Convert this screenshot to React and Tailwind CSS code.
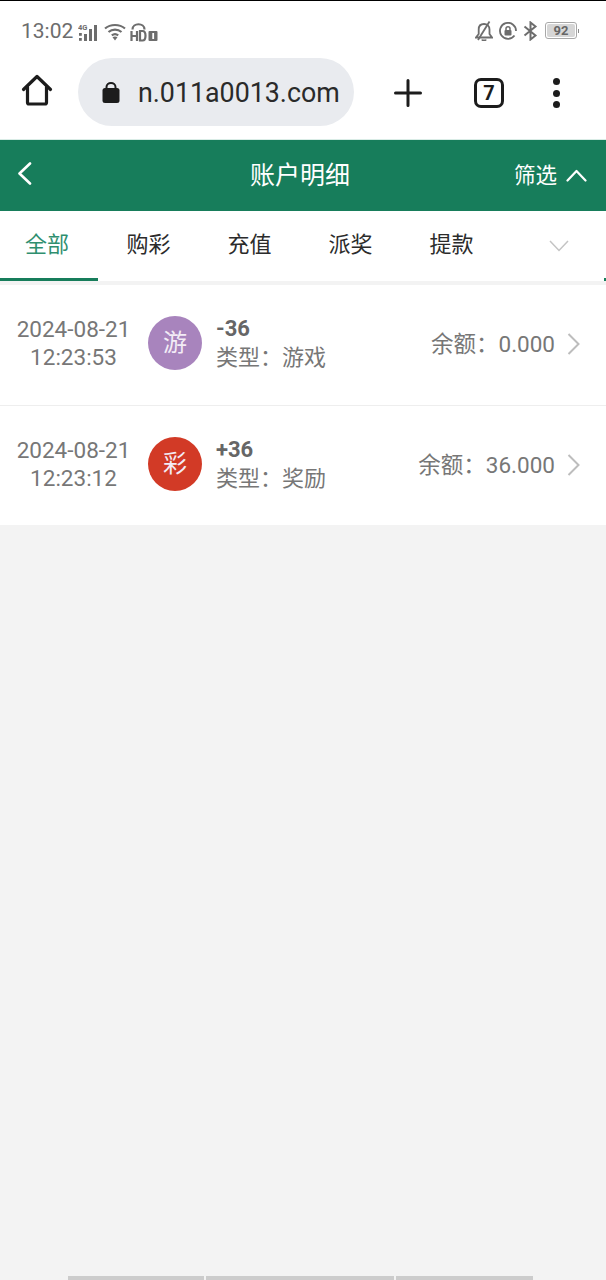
const cjk = { fontFamily: 'Roboto, "Noto Sans CJK SC", sans-serif' };

function StatusLeft() {
  return (
    <div className="flex items-center pt-[2px]">
      <span className="text-[21px] leading-none text-[#6d6d6d]">13:02</span>
      <svg className="ml-[5px]" width="21" height="18" viewBox="0 0 21 18" fill="#6d6d6d">
        <text x="0" y="6.5" fontSize="7.5" fontFamily="Roboto" fontWeight="700">4G</text>
        <rect x="1" y="10" width="2.800" height="2.800" />
        <rect x="1" y="15" width="2.800" height="2.800" />
        <rect x="6" y="11" width="3" height="7" />
        <rect x="11" y="6" width="3" height="12" />
        <rect x="16" y="2" width="3" height="16" />
      </svg>
      <svg className="ml-[5px]" width="22" height="18" viewBox="0 0 22 18" fill="none" stroke="#6d6d6d" strokeWidth="2.200">
        <path d="M1 5.5C6.5 .8 15.500 .8 21 5.500" />
        <path d="M4.500 9C8.200 5.800 13.800 5.800 17.500 9" />
        <path d="M7.800 12.300C9.800 10.700 12.200 10.700 14.200 12.300" />
        <path d="M11 17.500L8.500 14.300C10 13.300 12 13.300 13.500 14.300Z" fill="#6d6d6d" stroke="none" />
      </svg>
      <svg className="ml-[4px]" width="28" height="20" viewBox="0 0 28 20" fill="none">
        <path d="M2.500 7.500C2.500 .5 14.500 .5 14.500 7.500" stroke="#6d6d6d" strokeWidth="2.200" />
        <path d="M1.500 9V19M7 9V19M1.500 14H7" stroke="#6d6d6d" strokeWidth="2.200" />
        <path d="M10 9H12.500C16.500 9 16.500 18.500 12.500 18.500H10Z" stroke="#6d6d6d" strokeWidth="2.200" />
        <rect x="18.500" y="9" width="9" height="10" rx="1" fill="#6d6d6d" />
        <rect x="22.300" y="11" width="1.800" height="6" fill="#fff" />
      </svg>
    </div>
  );
}

function StatusRight() {
  return (
    <div className="flex items-center">
      <svg width="18" height="20" viewBox="0 0 18 20" fill="none" stroke="#6d6d6d" strokeWidth="1.800">
        <path d="M1 16.500H17L14.500 13V8.500C14.500 5 12 3 9 3S3.700 5 3.700 8.500V13Z" />
        <path d="M7 18.500C7.500 19.700 10.500 19.700 11 18.500" />
        <path d="M14.500 .5L3 19" />
      </svg>
      <svg className="ml-[6px]" width="18" height="18" viewBox="0 0 18 18" fill="none">
        <path d="M15.500 13.500A8 8 0 1 1 17 9" stroke="#6d6d6d" strokeWidth="1.800" />
        <rect x="5.500" y="8" width="7" height="5.500" rx="1" fill="#6d6d6d" />
        <path d="M7 8V6.500C7 4 11 4 11 6.500V8" stroke="#6d6d6d" strokeWidth="1.500" />
      </svg>
      <svg className="ml-[6px]" width="15" height="20" viewBox="0 0 15 20" fill="none" stroke="#6d6d6d" strokeWidth="2">
        <path d="M1.500 5.500L12.500 14.500L7.500 18.500V1.500L12.500 5.500L1.500 14.500" />
      </svg>
      <div className="ml-[7px] flex items-center">
        <div className="flex h-[17px] w-[32px] items-center justify-center rounded-[3px] border border-[#a8a8a8] p-[1px]">
          <div className="flex h-full w-full items-center justify-center rounded-[2px] bg-[#d6d6d6] text-[13px] leading-none font-bold text-[#666666]">92</div>
        </div>
        <div className="ml-[1px] h-[4px] w-[1px] bg-[#8a8a8a]" />
      </div>
    </div>
  );
}

function BrowserBar() {
  return (
    <div className="flex h-[82px] items-start border-b border-[#d9ece6] bg-white">
      <div className="flex w-[78px] justify-center pt-[16px] pr-[4px]">
        <svg width="32" height="32" viewBox="0 0 32 32" fill="none" stroke="#1c1c1c" strokeWidth="3.200" strokeLinejoin="round" strokeLinecap="round">
          <path d="M2.500 15.500L16 2.500L29.500 15.500" />
          <path d="M6.500 13V28.500C6.500 29.500 7 30 8 30H24C25 30 25.500 29.500 25.500 28.500V13" />
        </svg>
      </div>
      <div className="flex h-[68px] w-[276px] items-center overflow-hidden rounded-[34px] bg-[#e9ebef]">
        <svg className="ml-[24px] shrink-0" width="18" height="22" viewBox="0 0 18 22" fill="#1c1c1c">
          <rect x="0.500" y="7" width="17" height="15" rx="2.500" />
          <path d="M4.500 8V6C4.500 .5 13.500 .5 13.500 6V8" fill="none" stroke="#1c1c1c" strokeWidth="2" />
        </svg>
        <span className="ml-[18px] whitespace-nowrap pt-[2px] text-[26.800px] leading-none text-[#2a2a2a]">n.011a0013.com</span>
      </div>
      <div className="flex flex-1 items-center pl-[40px] pt-[20px]">
        <svg width="28" height="28" viewBox="0 0 28 28" stroke="#1c1c1c" strokeWidth="3" strokeLinecap="round">
          <path d="M1.500 14H26.500M14 1.500V26.500" />
        </svg>
        <div className="ml-[52px] flex h-[30px] w-[30px] items-center justify-center rounded-[7px] border-[3px] border-[#1c1c1c] text-[20px] leading-none font-bold text-[#1c1c1c]">7</div>
        <div className="ml-[49px] flex flex-col gap-[4.500px]">
          <div className="h-[7px] w-[7px] rounded-full bg-[#1c1c1c]" />
          <div className="h-[7px] w-[7px] rounded-full bg-[#1c1c1c]" />
          <div className="h-[7px] w-[7px] rounded-full bg-[#1c1c1c]" />
        </div>
      </div>
    </div>
  );
}

function Header() {
  return (
    <div className="relative flex h-[71px] items-center justify-center bg-[#177d5b] pr-[6px] text-white">
      <svg className="absolute left-[17px] top-[22px]" width="15" height="23" viewBox="0 0 15 23" fill="none" stroke="#fff" strokeWidth="2.600" strokeLinecap="round" strokeLinejoin="round">
        <path d="M13 1.500L2.500 11.500L13 21.500" />
      </svg>
      <span className="text-[25px] leading-none">账户明细</span>
      <div className="absolute right-[19px] top-0 flex h-full items-center">
        <span className="text-[21.500px] leading-none">筛选</span>
        <svg className="ml-[9px]" width="21" height="13" viewBox="0 0 21 13" fill="none" stroke="#fff" strokeWidth="2.200" strokeLinecap="round" strokeLinejoin="round">
          <path d="M1.500 11.500L10.500 2L19.500 11.500" />
        </svg>
      </div>
    </div>
  );
}

function Tabs() {
  const tabs = ['全部', '购彩', '充值', '派奖', '提款'];
  return (
    <div className="relative flex h-[74px] border-b-[4px] border-[#f3f3f3] bg-white">
      {tabs.map((t, i) => (
        <div key={t} className={i === 0
          ? 'flex h-[70px] w-[98px] items-center justify-center border-b-[3px] border-[#177d5b] pr-[4px] text-[22px] leading-none text-[#2f8f6f]'
          : 'flex h-[70px] w-[101px] items-center justify-center pb-[2px] text-[22px] leading-none text-[#2b2b2b]'}>
          {t}
        </div>
      ))}
      <svg className="ml-auto mr-[37px] mt-[29px]" width="20" height="12" viewBox="0 0 20 12" fill="none" stroke="#c4c4c4" strokeWidth="1.500">
        <path d="M1 1L10 10.500L19 1" />
      </svg>
      <div className="absolute right-0 top-[67px] h-[3px] w-[2px] bg-[#177d5b]" />
    </div>
  );
}

function Row({ date, time, badge, color, amount, type, balance, border }) {
  return (
    <div className={border
      ? 'flex h-[121px] items-center border-b border-[#eeeeee] bg-white pb-[4px]'
      : 'flex h-[119px] items-center bg-white pb-[3px]'}>
      <div className="w-[148px] pr-[1px] text-center text-[22.500px] leading-[28px] text-[#777777]">
        <div>{date}</div>
        <div>{time}</div>
      </div>
      <div className={`flex h-[54px] w-[54px] items-center justify-center rounded-full text-[24px] leading-none text-[#f3ecf6] ${color}`}>{badge}</div>
      <div className="ml-[14px] text-[22px] leading-[29px] text-[#777777]">
        <div className="font-bold text-[#666666]">{amount}</div>
        <div>类型：{type}</div>
      </div>
      <div className="ml-auto pt-[2px] text-[22.500px] leading-none text-[#777777]">余额：{balance}</div>
      <svg className="ml-[12px] mr-[26px] mt-[2px]" width="13" height="22" viewBox="0 0 13 22" fill="none" stroke="#bdbdbd" strokeWidth="2">
        <path d="M1.500 1L11.500 11L1.500 21" />
      </svg>
    </div>
  );
}

export default function App() {
  return (
    <div className="flex h-[1280px] w-[606px] flex-col overflow-hidden bg-[#f3f3f3]" style={cjk}>
      <div className="h-[1px] bg-black" />
      <div className="flex h-[57px] items-center justify-between bg-white pl-[21px] pr-[27px] pt-[2px]">
        <StatusLeft />
        <StatusRight />
      </div>
      <BrowserBar />
      <Header />
      <Tabs />
      <Row date="2024-08-21" time="12:23:53" badge="游" color="bg-[#a884bd]" amount="-36" type="游戏" balance="0.000" border />
      <Row date="2024-08-21" time="12:23:12" badge="彩" color="bg-[#d23a26]" amount="+36" type="奖励" balance="36.000" />
      <div className="flex-1" />
      <div className="flex h-[4px] justify-start gap-[2px] pl-[68px]">
        <div className="w-[136px] bg-[#cccccc]" />
        <div className="w-[188px] bg-[#cccccc]" />
        <div className="w-[137px] bg-[#cccccc]" />
      </div>
    </div>
  );
}
